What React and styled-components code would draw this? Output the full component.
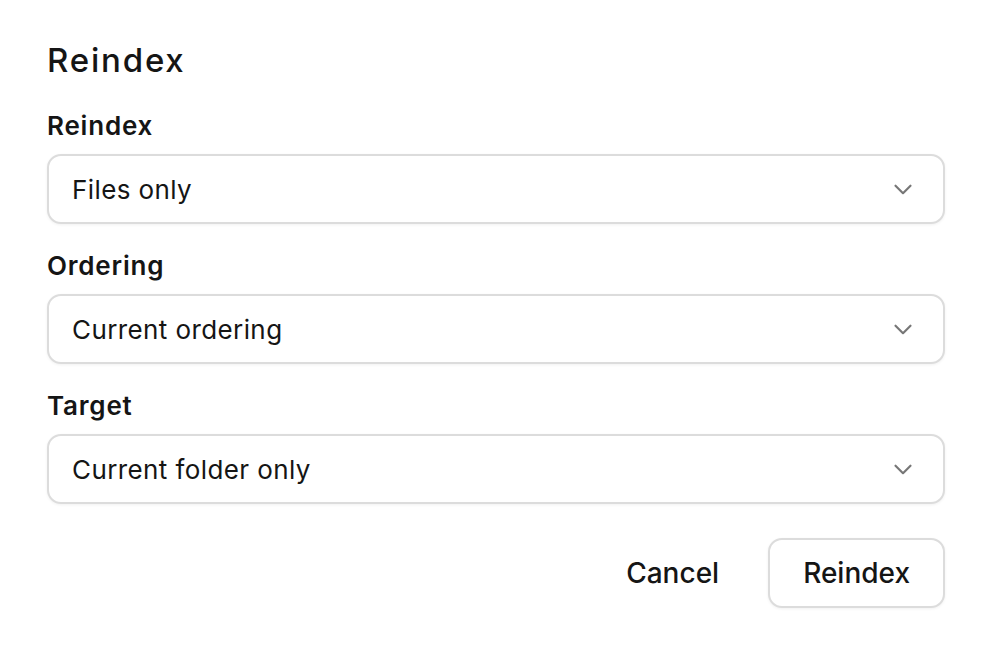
import React, { useState } from 'react';
import styled, { createGlobalStyle } from 'styled-components';

const Global = createGlobalStyle`
  html, body {
    margin: 0;
    background: #fff;
  }
  body {
    font-family: Inter, "Noto Sans", sans-serif;
    color: #151515;
  }
`;

const Dialog = styled.div`
  box-sizing: border-box;
  width: 992px;
  height: 654px;
  padding: 40px 47px 0 47px;
  display: flex;
  flex-direction: column;
`;

const Title = styled.h1`
  margin: 0 0 30px 0;
  font-size: 33px;
  line-height: 40px;
  font-weight: 500;
  letter-spacing: 1.8px;
`;

const Field = styled.div`
  display: flex;
  flex-direction: column;
  gap: 12px;
  margin-bottom: 26px;
`;

const Label = styled.label`
  font-size: 26px;
  line-height: 32px;
  font-weight: 580;
  letter-spacing: 0.8px;
`;

const Select = styled.button`
  box-sizing: border-box;
  width: 100%;
  height: 70px;
  padding: 0 30px 0 23px;
  display: flex;
  align-items: center;
  justify-content: space-between;
  background: #fff;
  border: 2px solid #dcdcdc;
  border-radius: 14px;
  box-shadow: 0 1px 3px rgba(0, 0, 0, 0.06);
  font-family: inherit;
  font-size: 26px;
  letter-spacing: 0.4px;
  color: #151515;
  cursor: pointer;
`;

const Footer = styled.div`
  display: flex;
  justify-content: flex-end;
  gap: 14px;
  margin-top: 8px;
`;

const Button = styled.button`
  box-sizing: border-box;
  height: 70px;
  padding: 0 33px;
  font-family: inherit;
  font-size: 28px;
  font-weight: 500;
  color: #151515;
  background: #fff;
  border: 2px solid ${p => (p.$outline ? '#dcdcdc' : 'transparent')};
  border-radius: 14px;
  box-shadow: ${p => (p.$outline ? '0 1px 3px rgba(0,0,0,0.06)' : 'none')};
  cursor: pointer;
`;

const Chevron = () => (
  <svg width="20" height="20" viewBox="0 0 24 24" fill="none" stroke="#777" strokeWidth="2.6" strokeLinecap="round" strokeLinejoin="round">
    <path d="M3 8l9 9 9-9" />
  </svg>
);

const FIELDS = [
  ['Reindex', 'Files only'],
  ['Ordering', 'Current ordering'],
  ['Target', 'Current folder only'],
];

export default function App() {
  const [values] = useState(FIELDS);
  return (
    <>
      <Global />
      <Dialog>
        <Title>Reindex</Title>
        {values.map(([label, value]) => (
          <Field key={label}>
            <Label>{label}</Label>
            <Select>
              <span>{value}</span>
              <Chevron />
            </Select>
          </Field>
        ))}
        <Footer>
          <Button>Cancel</Button>
          <Button $outline>Reindex</Button>
        </Footer>
      </Dialog>
    </>
  );
}
